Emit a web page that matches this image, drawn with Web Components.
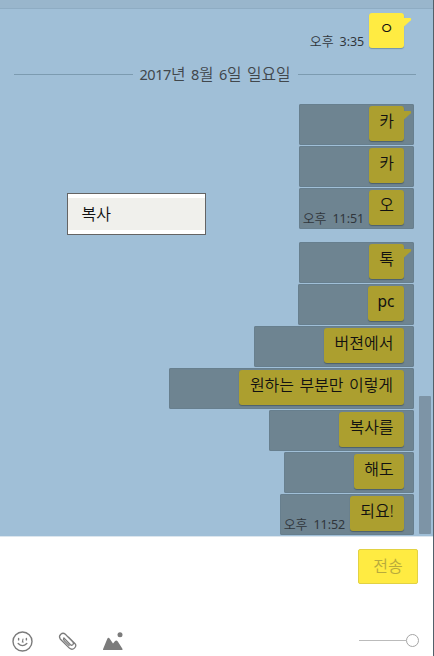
<!DOCTYPE html>
<html lang="ko"><head><meta charset="utf-8"><title>채팅</title>
<style>
html,body{margin:0;height:656px;overflow:hidden}
body{font-family:"Noto Sans","Noto Sans CJK KR",sans-serif}
</style></head><body><chat-window></chat-window>
<script>
const define=(name,html,setup)=>customElements.define(name,class extends HTMLElement{
  connectedCallback(){
    if(this.shadowRoot)return;
    this.attachShadow({mode:'open'}).innerHTML=html;
    if(setup)setup(this,this.shadowRoot);
  }
});

define('chat-message',`<style>
:host{display:flex;justify-content:flex-end;height:41px}
.row{display:flex;box-sizing:border-box;height:41px;padding:2px 10px 0 0;border-radius:2px;justify-content:flex-end}
:host([selected]) .row{background:#6e8491;box-shadow:inset 0 0 0 1px #677f8e}
.time{width:65px;margin-right:5px;box-sizing:border-box;text-align:right;font:350 13px/18px "Noto Sans","Noto Sans CJK KR",sans-serif;color:#30363c;padding-top:19px;white-space:nowrap;word-spacing:2.8px;letter-spacing:-.1px}
.time b{font-weight:400;font-size:12.5px}
.bubble{position:relative;box-sizing:border-box;height:35px;border-radius:3px;background:#ffeb42;box-shadow:0 1px 1px #55748a99;color:#111;font-family:"Noto Sans","Noto Sans CJK KR",sans-serif;font-weight:350;font-size:16px;line-height:30px;text-align:center;white-space:nowrap;word-spacing:1.2px}
:host([selected]) .bubble{background:#ac9f2f;box-shadow:0 1px 1px #3f525fbb}
:host([latin]) .bubble{font-weight:400;font-size:15.5px}
svg{display:none;position:absolute;left:100%;top:5px;width:8px;height:9px;fill:#ffeb42}
:host([selected]) svg{fill:#ac9f2f}
:host([tail]) svg{display:block}
</style><div class="row"><div class="time"></div><div class="bubble"><slot></slot><svg viewBox="0 0 8 9"><path d="M0 0H6.5Q8 .8 6.8 2.2L0 8.5Z"/></svg></div></div>`,(el,root)=>{
  const time=el.getAttribute('time');
  if(time){
    const [half,clock]=time.split(' ');
    root.querySelector('.time').innerHTML=`${half} <b>${clock}</b>`;
  }
  const bubble=root.querySelector('.bubble');
  bubble.style.width=el.getAttribute('width')+'px';
});

define('date-divider',`<style>
:host{display:flex;align-items:center;height:24px;margin:0 17px 0 14px;color:#41474c;font:350 15.8px/24px "Noto Sans","Noto Sans CJK KR",sans-serif}
:host::before,:host::after{content:"";flex:1;height:1px;background:#7c9bb0}
span{width:165px;text-align:center;white-space:nowrap;word-spacing:1.4px}
::slotted(b){font-weight:400;font-size:14.5px;letter-spacing:-.4px}
</style><span><slot></slot></span>`);

define('context-menu',`<style>
:host{position:absolute;left:67px;top:193px;width:139px;height:42px;box-sizing:border-box;border:1px solid #646464;background:#fff;padding:4px 0}
div{height:32px;background:#f0f0ec;padding-left:13.5px;font:350 16px/32px "Noto Sans","Noto Sans CJK KR",sans-serif;color:#111}
</style><div><slot></slot></div>`);

define('scroll-thumb',`<style>:host{position:absolute;left:419px;top:396px;width:12px;height:138px;background:#7d94a6;border-radius:1px}</style>`);

define('send-button',`<style>
:host{display:block;box-sizing:border-box;width:60px;height:35px;border:1px solid #e2d243;border-radius:2px;background:#ffeb42;color:#b8aa3c;font:350 16px/32px "Noto Sans","Noto Sans CJK KR",sans-serif;text-align:center}
</style><slot></slot>`);

define('tool-icons',`<style>:host{display:flex;align-items:center;gap:24px}svg{display:block}</style>
<svg width="22" height="22" viewBox="0 0 22 22" fill="none" stroke="#7b7b7b" stroke-width="1.4" stroke-linecap="round"><circle cx="11.5" cy="11.5" r="9.5"/><path d="M7.6 8.5v1.4M15.4 8.5v1.4M7.2 13.4Q11.5 17.8 15.8 13.4"/><path stroke-width="1.1" d="M12 9 11.4 12H12.3"/></svg>
<svg width="22" height="22" viewBox="0 0 22 22" fill="none" stroke="#7b7b7b" stroke-width="1.35" stroke-linecap="round"><path transform="translate(-.2 1) scale(.95)" d="M7.4 7.2 14.1 14.2Q15.8 15.7 17 14.4T16.8 11.5L9 3.5Q6.6 1.3 4.2 3.4T3.6 8.4L13.2 18Q16 20.5 18.6 18T19 13.2L12.4 6.5M7.4 7.2Q6.2 8.7 8 10.4L13 15.4"/></svg>
<svg width="22" height="22" viewBox="0 0 22 22" fill="#7b7b7b"><circle cx="17" cy="4.7" r="2.5"/><path d="M0 19.2 4.2 9Q5.3 6.6 6.8 8.8L10 13.6 12.1 11.1Q13.4 9.8 14.8 11.6L19.4 18.8Q19.8 20 18.8 20H.8Q-.2 20 0 19.2Z"/></svg>`);

define('opacity-slider',`<style>:host{display:flex;align-items:center;width:60px;height:13px;margin-bottom:2px}
i{flex:1;height:1px;background:#bbb}b{box-sizing:border-box;width:13px;height:13px;border:1px solid #a5a5a5;border-radius:50%;background:#fff}</style><i></i><b></b>`);

define('chat-window',`<style>
:host{display:block;position:relative;width:434px;height:656px;box-sizing:border-box;border-right:1px solid #52606a;background:#fff;overflow:hidden}
.chat{height:536px;background:#a0bfd7;border-bottom:1px solid #dce6ee;box-sizing:content-box}
.top{box-sizing:border-box;height:9px;background:#99b6cc;border-bottom:1px solid #8eacc3}
.group{display:grid;gap:1px;padding-right:19px}
.first{padding-top:2px}
.compose{display:flex;justify-content:flex-end;padding:12px 15px 0 0;height:80px}
.tools{display:flex;justify-content:space-between;padding:1px 14px 0 11px;align-items:center;height:22px}
</style>
<div class="chat"><div class="top"></div>
<div class="group first"><chat-message width="35" time="오후 3:35" tail>ㅇ</chat-message></div>
<date-divider style="margin-top:10px;margin-bottom:18px"><b>2017</b>년 <b>8</b>월 <b>6</b>일 일요일</date-divider>
<div class="group"><chat-message selected width="35" tail>카</chat-message><chat-message selected width="35">카</chat-message><chat-message selected width="35" time="오후 11:51">오</chat-message></div>
<div class="group" style="padding-top:13px"><chat-message selected width="35" tail>톡</chat-message><chat-message selected latin width="36">pc</chat-message><chat-message selected width="80">버젼에서</chat-message><chat-message selected width="165">원하는 부분만 이렇게</chat-message><chat-message selected width="65">복사를</chat-message><chat-message selected width="50">해도</chat-message><chat-message selected width="54" time="오후 11:52">되요!</chat-message></div></div>
<div class="compose"><send-button>전송</send-button></div>
<div class="tools"><tool-icons></tool-icons><opacity-slider></opacity-slider></div>
<context-menu>복사</context-menu><scroll-thumb></scroll-thumb>`);
</script></body></html>
